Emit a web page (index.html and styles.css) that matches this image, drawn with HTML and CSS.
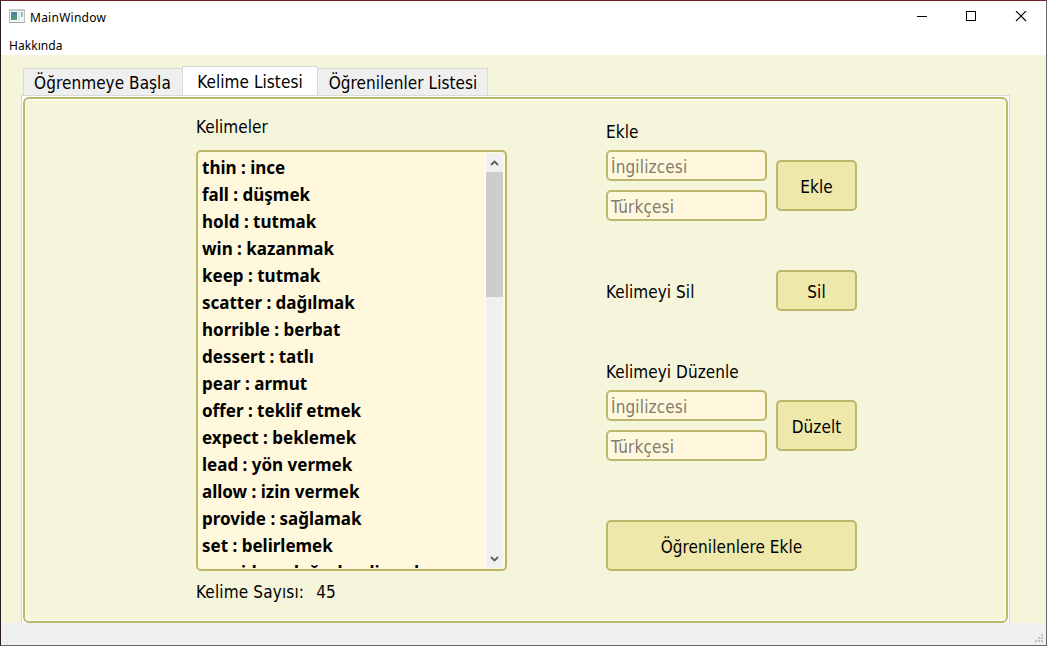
FILE: index.html
```html
<!DOCTYPE html>
<html lang="tr">
<head>
<meta charset="utf-8">
<title>MainWindow</title>
<link rel="stylesheet" href="styles.css">
</head>
<body>
<div class="window">
  <header class="titlebar">
    <svg class="app-icon" width="16" height="14" viewBox="0 0 16 14">
      <defs><linearGradient id="g" x1="0" y1="0" x2="0" y2="1"><stop offset="0" stop-color="#4a7fa5"/><stop offset="1" stop-color="#4fa070"/></linearGradient></defs>
      <rect x=".5" y=".5" width="15" height="13" fill="#f4f5f6" stroke="#b9bdc2"/>
      <path d="M0 1h16" stroke="#c4c8cc" stroke-width="2"/>
      <rect x="2" y="3" width="6" height="8" fill="url(#g)"/>
      <rect x="9" y="3" width="2" height="8" fill="#dfe3e6"/>
      <rect x="12" y="3" width="2" height="5" fill="#8fc0b4"/>
      <path d="M0 13.500h16" stroke="#a4a8ac"/>
    </svg>
    <span class="title">MainWindow</span>
    <svg class="controls" width="110" height="12" viewBox="0 0 110 12" fill="none" stroke="#000" shape-rendering="crispEdges">
      <path d="M0 5.500h10"/>
      <rect x="49.500" y=".5" width="9" height="9"/>
      <path d="M99 0l10 10M109 0l-10 10" shape-rendering="auto" stroke-width="1.1"/>
    </svg>
  </header>
  <nav class="menubar"><span class="menu">Hakkında</span></nav>
  <main class="content">
    <div class="tabs">
      <div class="tab tab-start"><span>Öğrenmeye Başla</span></div>
      <div class="tab active"><span>Kelime Listesi</span></div>
      <div class="tab tab-learned"><span>Öğrenilenler Listesi</span></div>
    </div>
    <div class="pane">
      <section class="group">
        <div class="words">
          <label class="label">Kelimeler</label>
          <div class="list">
            <ul class="items">
              <li>thin : ince</li><li>fall : düşmek</li><li>hold : tutmak</li><li>win : kazanmak</li><li>keep : tutmak</li><li>scatter : dağılmak</li><li>horrible : berbat</li><li>dessert : tatlı</li><li>pear : armut</li><li>offer : teklif etmek</li><li>expect : beklemek</li><li>lead : yön vermek</li><li>allow : izin vermek</li><li>provide : sağlamak</li><li>set : belirlemek</li><li>consider : değerlendirmek</li>
            </ul>
            <div class="scrollbar">
              <svg class="arrow" width="9" height="6" viewBox="0 0 9 6" fill="none" stroke="#5c5c5c" stroke-width="1.8"><path d="M1 5l3.500-3.500L8 5"/></svg>
              <div class="thumb"></div>
              <svg class="arrow down" width="9" height="6" viewBox="0 0 9 6" fill="none" stroke="#5c5c5c" stroke-width="1.800"><path d="M1 1l3.500 3.500L8 1"/></svg>
            </div>
          </div>
          <div class="label count"><span>Kelime Sayısı:</span><span>45</span></div>
        </div>
        <div class="forms">
          <label class="label">Ekle</label>
          <div class="form">
            <div class="fields"><input class="field" placeholder="İngilizcesi"><input class="field" placeholder="Türkçesi"></div>
            <button class="button">Ekle</button>
          </div>
          <div class="delete"><span class="label">Kelimeyi Sil</span><button class="button short">Sil</button></div>
          <label class="label">Kelimeyi Düzenle</label>
          <div class="form">
            <div class="fields"><input class="field" placeholder="İngilizcesi"><input class="field" placeholder="Türkçesi"></div>
            <button class="button">Düzelt</button>
          </div>
          <button class="button wide">Öğrenilenlere Ekle</button>
        </div>
      </section>
    </div>
  </main>
  <footer class="statusbar">
    <svg width="8" height="8" viewBox="0 0 8 8" fill="#bfbfbf" shape-rendering="crispEdges"><path d="M6 0h2v2H6zM3 3h2v2H3zM6 3h2v2H6zM0 6h2v2H0zM3 6h2v2H3zM6 6h2v2H6z"/></svg>
  </footer>
</div>
</body>
</html>
```
FILE: styles.css
```css
* { box-sizing: border-box; }
body { margin: 0; overflow: hidden; color: #000; font-family: "DejaVu Sans Condensed", "DejaVu Sans", sans-serif; font-stretch: condensed; font-size: 17px; letter-spacing: 0.06px; }
.window { width: 1047px; height: 646px; display: flex; flex-direction: column; background: #fff; border: 1px solid; border-color: #6e2026 #6a6668 #666 #2b1b20; }
.titlebar { height: 32px; display: flex; align-items: flex-start; padding: 8px 19px 0 8px; font: 12px/18px "Noto Sans", sans-serif; }
.title { margin-left: 5px; letter-spacing: 0.25px; }
.controls { margin: 2px 0 0 auto; }
.menubar { height: 22px; padding-left: 8px; font: 12px/26px "Noto Sans", sans-serif; }
.content { height: 568px; background: #f5f5dc; padding: 11px 36px 0 20px; display: flex; flex-direction: column; }
.tabs { display: flex; align-items: flex-end; height: 29px; padding-left: 2px; }
.tab { height: 27px; background: #efefef; border: 1px solid #d9d9d9; border-bottom: 0; display: flex; justify-content: center; line-height: 28px; white-space: nowrap; }
.tab-start { width: 159px; border-right: 0; padding-right: 1px; }
.tab.active { width: 136px; height: 29px; background: #fff; border-bottom: 0; line-height: 31px; }
.tab-learned { width: 170px; border-left: 0; padding-left: 1px; }
.pane { flex: 1; background: #fff; border: 1px solid #d9d9d9; border-bottom: 0; padding: 1px 1px 0; }
.group { height: 526px; background: #f5f5dc; border: 2px solid #bdb76b; border-radius: 6px; box-shadow: inset 0 0 0 1px #fff; display: flex; padding: 18px 0 0 171px; }
.label { display: block; height: 20px; line-height: 20px; white-space: nowrap; }
.words { width: 311px; }
.list { height: 421px; margin-top: 13px; display: flex; border: 2px solid #bdb76b; border-radius: 5px; background: #fff8dc; padding: 1px 2px 1px 4px; }
.items { flex: 1; margin: 0; padding: 1px 0 0; list-style: none; overflow: hidden; font: bold 17px/27px "Noto Sans", sans-serif; letter-spacing: 0; white-space: nowrap; }
.items li { height: 27px; }
.scrollbar { width: 18px; background: #f0f0f0; border-left: 1px solid #fff; display: flex; flex-direction: column; align-items: center; }
.arrow { margin: 7px 0 6px; flex: none; }
.thumb { width: 17px; height: 125px; background: #cdcdcd; }
.down { margin-top: auto; }
.count { display: flex; gap: 12px; margin-top: 11px; letter-spacing: 0.15px; }
.forms { width: 251px; margin-left: 99px; padding-top: 5px; }
.form { display: flex; align-items: center; justify-content: space-between; margin-top: 8px; height: 71px; }
.fields { display: grid; gap: 9px; }
.field { width: 161px; height: 31px; border: 2px solid #bdb76b; border-radius: 5px; background: #fff8dc; padding: 2px 3px 0; font: inherit; letter-spacing: 0.15px; }
.field::placeholder { color: #807c6e; opacity: 1; }
.button { width: 81px; height: 51px; border: 2px solid #bdb76b; border-radius: 5px; background: #eee8aa; color: #000; font: inherit; letter-spacing: inherit; padding: 3px 0 0; }
.button.short { height: 41px; }
.delete { display: flex; align-items: center; justify-content: space-between; margin: 49px 0 51px; height: 41px; }
.delete .label { padding-top: 1px; }
.button.wide { width: 251px; margin-top: 59px; display: block; }
.statusbar { flex: 1; background: #f0f0f0; display: flex; justify-content: flex-end; align-items: flex-end; padding: 0 3px 3px; }
```
